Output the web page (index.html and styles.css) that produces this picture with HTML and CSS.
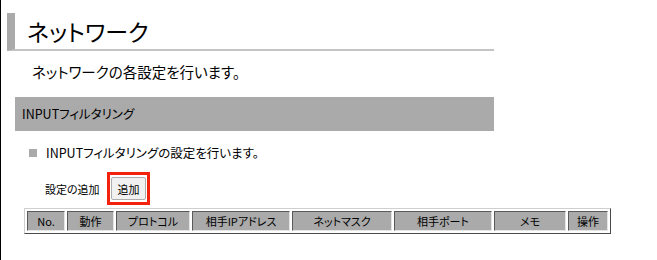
FILE: index.html
```html
<!DOCTYPE html>
<html lang="ja">
<head>
<meta charset="utf-8">
<title>ネットワーク</title>
<link rel="stylesheet" href="styles.css">
</head>
<body>
<div class="page">
  <h1 class="title">ネットワーク</h1>
  <p class="lead">ネットワークの各設定を行います。</p>
  <div class="section">INPUTフィルタリング</div>
  <p class="desc"><span class="bullet"></span>INPUTフィルタリングの設定を行います。</p>
  <div class="addrow">
    <span class="addlabel">設定の追加</span>
    <span class="highlight"><button class="btn" type="button">追加</button></span>
  </div>
  <table class="grid">
    <thead>
      <tr>
        <th class="c1">No.</th>
        <th class="c2">動作</th>
        <th class="c3">プロトコル</th>
        <th class="c4">相手IPアドレス</th>
        <th class="c5">ネットマスク</th>
        <th class="c6">相手ポート</th>
        <th class="c7">メモ</th>
        <th class="c8">操作</th>
      </tr>
    </thead>
  </table>
</div>
</body>
</html>
```
FILE: styles.css
```css
html, body {
  margin: 0;
  padding: 0;
}
body {
  min-height: 260px;
  box-sizing: border-box;
  border-left: 1px solid #000;
  background: #fff;
  color: #000;
  font-family: "Noto Sans CJK JP", "Noto Sans", sans-serif;
  font-feature-settings: "palt";
}
.page {
  padding: 13px 0 0 6px;
}
.title {
  box-sizing: border-box;
  width: 487px;
  height: 38px;
  margin: 0;
  border-left: 8px solid #aaaaaa;
  border-bottom: 2px solid #c4c4c4;
  padding-left: 12px;
  font-size: 23px;
  font-weight: normal;
  line-height: 36px;
}
.lead {
  margin: 11px 0 0 25px;
  font-size: 14.5px;
  line-height: 20px;
}
.section {
  box-sizing: border-box;
  width: 479px;
  height: 34px;
  margin: 15px 0 0 8px;
  padding-left: 7px;
  background: #aaaaaa;
  font-size: 12.5px;
  line-height: 34px;
}
.desc {
  display: flex;
  align-items: center;
  margin: 12px 0 0 22px;
  font-size: 12.5px;
  line-height: 20px;
}
.bullet {
  width: 8px;
  height: 8px;
  margin-right: 9px;
  background: #aaaaaa;
}
.addrow {
  display: flex;
  align-items: center;
  margin: 9px 0 0 38px;
  height: 33px;
}
.addlabel {
  width: 62px;
  font-size: 11px;
}
.highlight {
  box-sizing: border-box;
  display: flex;
  align-items: center;
  justify-content: center;
  width: 43px;
  height: 33px;
  border: 3px solid #f3220c;
}
.btn {
  box-sizing: border-box;
  width: 35px;
  height: 23px;
  padding: 0;
  border: 1px solid #adadad;
  border-radius: 2px;
  background: #f1f1f1;
  color: #000;
  font-family: inherit;
  font-size: 11px;
  font-feature-settings: "palt";
}
.grid {
  margin: 3px 0 0 17px;
  table-layout: fixed;
  border-collapse: separate;
  border-spacing: 2px;
  border: 1px solid;
  border-color: #cfcfcf #4a4a4a #4a4a4a #cfcfcf;
}
.grid th {
  box-sizing: border-box;
  height: 20px;
  padding: 0;
  background: #aaaaaa;
  border: 1px solid;
  border-color: #5a5a5a #e4e4e4 #e4e4e4 #5a5a5a;
  font-size: 11px;
  font-weight: normal;
  line-height: 18px;
  text-align: center;
}
.c1 { width: 38px; }
.c2 { width: 47px; }
.c3 { width: 74px; }
.c4 { width: 98px; }
.c5 { width: 100px; }
.c6 { width: 98px; }
.c7 { width: 72px; }
.c8 { width: 40px; }
```
